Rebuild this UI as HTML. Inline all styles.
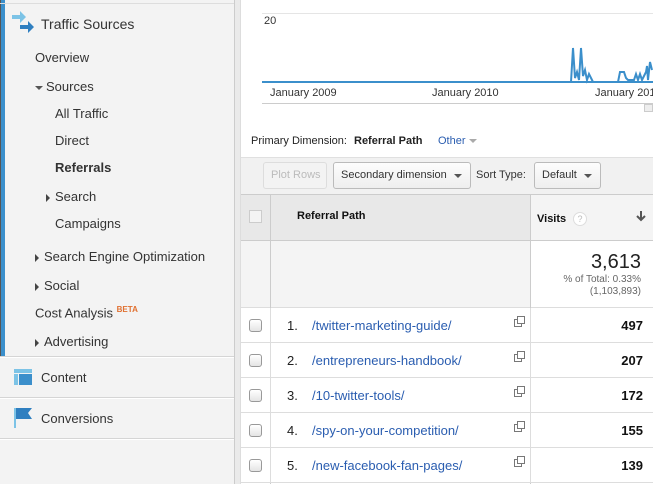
<!DOCTYPE html>
<html><head><style>
*{margin:0;padding:0;box-sizing:border-box}
body{width:653px;height:484px;overflow:hidden;background:#fff;font-family:"Liberation Sans",Arial,sans-serif;font-size:13px;color:#333;position:relative}
.a{position:absolute;white-space:nowrap}
#side{position:absolute;left:0;top:0;width:235px;height:484px;background:#f3f3f3;border-right:1px solid #ccc}
#gap{position:absolute;left:235px;top:0;width:6px;height:484px;background:#eaeaea;border-right:1px solid #ddd}
.sep{position:absolute;left:0;width:234px;height:2px;background:#d5d5d5;border-bottom:1px solid #fff}
.tri-d{display:inline-block;width:0;height:0;border-left:4px solid transparent;border-right:4px solid transparent;border-top:4px solid #555;vertical-align:middle;margin-right:3px}
.tri-r{display:inline-block;width:0;height:0;border-top:4px solid transparent;border-bottom:4px solid transparent;border-left:4px solid #444;vertical-align:middle;margin-right:5px}
.row{position:absolute;left:241px;width:412px;height:35px;border-bottom:1px solid #ddd;background:#fff}
.cb{position:absolute;left:8px;top:11px;width:13px;height:13px;border:1px solid #999;border-radius:3px;background:linear-gradient(#fff,#e4e4e4)}
.n{position:absolute;left:46px;top:10px;color:#222}
.l{position:absolute;left:71px;top:10px;color:#2a5db0}
.ic{position:absolute;left:273px;top:11px;width:8px;height:8px;border:1px solid #777;background:#fff}
.ic:after{content:"";position:absolute;left:2px;top:-4px;width:6px;height:6px;border:1px solid #777;background:#fff}
.v{position:absolute;right:10px;top:10px;font-weight:bold;color:#111}
.vl{position:absolute;left:289px;top:0;width:1px;height:35px;background:#ddd}
.cl{position:absolute;left:29px;top:0;width:1px;height:35px;background:#ddd}
.btn{position:absolute;top:162px;height:27px;border:1px solid #bbb;border-radius:3px;background:linear-gradient(#fdfdfd,#eee);font-size:11px;line-height:25px;padding:0 7px;color:#333;white-space:nowrap;overflow:hidden}
</style></head><body>
<div id="side">
<div class="a" style="left:0;top:0;width:1px;height:357px;background:#555"></div>
<div class="a" style="left:1px;top:0;width:4px;height:357px;background:#3b8fcb"></div>
<div class="a" style="left:0;top:3px;width:234px;height:1px;background:#ddd"></div>
<svg class="a" style="left:12px;top:11px" width="24" height="24"><path d="M0 4h8V0l6 6-6 6V8H0z" fill="#7cc3e6"/><path d="M8 14h8v-4l6 6-6 6v-4H8z" fill="#2f7fc0"/></svg>
<div class="a" style="left:41px;top:16px;font-size:14px">Traffic Sources</div>
<div class="a" style="left:35px;top:50px">Overview</div>
<div class="a" style="left:35px;top:79px"><span class="tri-d"></span>Sources</div>
<div class="a" style="left:55px;top:106px">All Traffic</div>
<div class="a" style="left:55px;top:133px">Direct</div>
<div class="a" style="left:55px;top:160px;font-weight:bold">Referrals</div>
<div class="a" style="left:46px;top:189px"><span class="tri-r"></span>Search</div>
<div class="a" style="left:55px;top:216px">Campaigns</div>
<div class="a" style="left:35px;top:249px"><span class="tri-r"></span>Search Engine Optimization</div>
<div class="a" style="left:35px;top:278px"><span class="tri-r"></span>Social</div>
<div class="a" style="left:35px;top:305px">Cost Analysis <sup style="color:#e07030;font-size:8px;font-weight:bold">BETA</sup></div>
<div class="a" style="left:35px;top:334px"><span class="tri-r"></span>Advertising</div>
<div class="sep" style="top:356px"></div>
<div class="a" style="left:14px;top:369px;width:18px;height:4px;background:#7cc3e6"></div>
<div class="a" style="left:14px;top:374px;width:4px;height:11px;background:#7cc3e6"></div>
<div class="a" style="left:19px;top:374px;width:13px;height:11px;background:#3b8fcb"></div>
<div class="a" style="left:41px;top:370px">Content</div>
<div class="sep" style="top:397px"></div>
<div class="a" style="left:14px;top:408px;width:2px;height:20px;background:#7cc3e6"></div>
<svg class="a" style="left:16px;top:408px" width="17" height="12"><path d="M0 0h16l-4 5 4 6H0z" fill="#2f7fc0"/></svg>
<div class="a" style="left:41px;top:411px">Conversions</div>
<div class="sep" style="top:438px"></div>
</div>
<div id="gap"></div>

<div class="a" style="left:262px;top:13px;width:391px;height:1px;background:#e5e5e5"></div>
<div class="a" style="left:264px;top:15px;font-size:11px">20</div>
<svg class="a" style="left:262px;top:40px" width="391" height="45"><polyline fill="none" stroke="#3b8fcb" stroke-width="2" points="0,42 309,42 311,8 313,38 315,32 317,40 319,8 321,36 323,30 325,40 327,34 329,38 331,42 356,42 358,32 362,32 364,38 366,40 372,40 374,34 376,40 378,34 380,40 382,36 384,32 385,26 386,40 388,22 390,30"/></svg>
<div class="a" style="left:262px;top:81px;width:391px;height:2px;background:#3b8fcb"></div>
<div class="a" style="left:270px;top:87px;font-size:11px">January 2009</div>
<div class="a" style="left:432px;top:87px;font-size:11px">January 2010</div>
<div class="a" style="left:595px;top:87px;font-size:11px">January 201</div>
<div class="a" style="left:262px;top:103px;width:391px;height:1px;background:#ccc"></div>
<div class="a" style="left:644px;top:104px;width:9px;height:8px;background:#eee;border:1px solid #ccc"></div>

<div class="a" style="left:251px;top:135px;font-size:11px;color:#222">Primary Dimension:</div>
<div class="a" style="left:354px;top:135px;font-size:11px;font-weight:bold;color:#222">Referral Path</div>
<div class="a" style="left:438px;top:135px;font-size:11px;color:#2a5db0">Other <span style="display:inline-block;border-left:4px solid transparent;border-right:4px solid transparent;border-top:4px solid #aaa;vertical-align:middle"></span></div>
<div class="a" style="left:241px;top:157px;width:412px;height:37px;background:#f1f1f1;border-top:1px solid #e0e0e0"></div>
<div class="btn" style="left:263px;width:64px;color:#bbb;border-color:#ddd;background:#f3f3f3">Plot Rows</div>
<div class="btn" style="left:333px;width:138px">Secondary dimension <span style="position:absolute;right:8px;top:11px;border-left:4px solid transparent;border-right:4px solid transparent;border-top:4px solid #555"></span></div>
<div class="a" style="left:476px;top:169px;font-size:11px">Sort Type:</div>
<div class="btn" style="left:534px;width:67px">Default <span style="position:absolute;right:8px;top:11px;border-left:4px solid transparent;border-right:4px solid transparent;border-top:4px solid #555"></span></div>

<div class="a" style="left:241px;top:194px;width:412px;height:47px;background:#e8e8e8;border-top:1px solid #ccc;border-bottom:1px solid #ccc"></div>
<div class="a" style="left:249px;top:210px;width:13px;height:13px;border:1px solid #ccc;background:#f4f4f4"></div>
<div class="a" style="left:270px;top:194px;width:1px;height:290px;background:#ccc"></div>
<div class="a" style="left:530px;top:194px;width:1px;height:290px;background:#ccc"></div>
<div class="a" style="left:297px;top:210px;font-size:11px;font-weight:bold;color:#111">Referral Path</div>
<div class="a" style="left:531px;top:195px;width:122px;height:45px;background:#f4f4f4"></div>
<div class="a" style="left:537px;top:213px;font-size:11px;font-weight:bold;color:#111">Visits</div>
<div class="a" style="left:573px;top:212px;width:14px;height:14px;border-radius:7px;background:#fff;border:1px solid #ddd;font-size:9px;color:#bbb;text-align:center;line-height:12px">?</div>
<svg class="a" style="left:636px;top:210px" width="10" height="12"><path d="M5 1v9M1 6l4 4 4-4" fill="none" stroke="#555" stroke-width="2"/></svg>

<div class="a" style="left:241px;top:241px;width:29px;height:67px;background:#f4f4f4;border-bottom:1px solid #ddd"></div>
<div class="a" style="left:271px;top:241px;width:259px;height:67px;background:#f4f4f4;border-bottom:1px solid #ddd"></div>
<div class="a" style="left:531px;top:241px;width:122px;height:67px;background:#fff;border-bottom:1px solid #ddd"></div>
<div class="a" style="right:12px;top:251px;font-size:20px;color:#222">3,613</div>
<div class="a" style="right:12px;top:274px;font-size:10px;color:#666">% of Total: 0.33%</div>
<div class="a" style="right:12px;top:286px;font-size:10px;color:#666">(1,103,893)</div>

<div class="row" style="top:308px"><div class="cl"></div><div class="vl"></div><div class="cb"></div><div class="n">1.</div><div class="l">/twitter-marketing-guide/</div><div class="ic"></div><div class="v">497</div></div>
<div class="row" style="top:343px"><div class="cl"></div><div class="vl"></div><div class="cb"></div><div class="n">2.</div><div class="l">/entrepreneurs-handbook/</div><div class="ic"></div><div class="v">207</div></div>
<div class="row" style="top:378px"><div class="cl"></div><div class="vl"></div><div class="cb"></div><div class="n">3.</div><div class="l">/10-twitter-tools/</div><div class="ic"></div><div class="v">172</div></div>
<div class="row" style="top:413px"><div class="cl"></div><div class="vl"></div><div class="cb"></div><div class="n">4.</div><div class="l">/spy-on-your-competition/</div><div class="ic"></div><div class="v">155</div></div>
<div class="row" style="top:448px"><div class="cl"></div><div class="vl"></div><div class="cb"></div><div class="n">5.</div><div class="l">/new-facebook-fan-pages/</div><div class="ic"></div><div class="v">139</div></div>
</body></html>
